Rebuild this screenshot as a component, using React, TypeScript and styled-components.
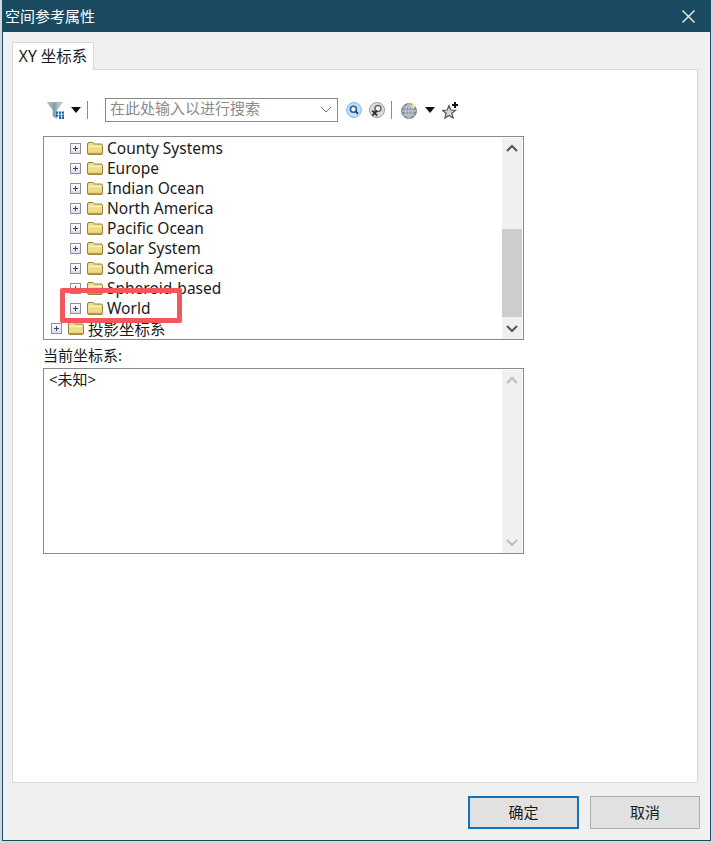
import styled, { createGlobalStyle } from "styled-components";

const FONT = `"Noto Sans", "Noto Sans CJK SC", sans-serif`;

const GlobalStyle = createGlobalStyle`
  html, body {
    margin: 0;
    padding: 0;
    background: #cfd9de;
  }
  body {
    font-family: ${FONT};
    color: #1a1a1a;
  }
`;

const Window = styled.div`
  box-sizing: border-box;
  width: 709px;
  height: 841px;
  margin-left: 2px;
  display: flex;
  flex-direction: column;
  background: #f0f0f0;
  border: 1px solid #1c4a60;
  border-top: none;
`;

const TitleBar = styled.div`
  box-sizing: border-box;
  height: 32px;
  flex: none;
  display: flex;
  align-items: center;
  justify-content: space-between;
  background: #1a4a60;
  color: #fff;
  font-size: 15px;
  padding: 0 15px 2px 2px;
`;

const Close = styled.span`
  display: flex;
  margin-top: 2px;
`;

const TabArea = styled.div`
  flex: 1;
  min-height: 0;
  display: flex;
  flex-direction: column;
  padding: 10px 12px 0 9px;
`;

const TabStrip = styled.div`
  display: flex;
  margin-bottom: -1px;
  position: relative;
`;

const Tab = styled.div`
  box-sizing: border-box;
  width: 82px;
  height: 28px;
  display: flex;
  align-items: center;
  justify-content: center;
  padding-bottom: 3px;
  background: #fff;
  border: 1px solid #d9d9d9;
  border-bottom: none;
  font-size: 15.5px;
`;

const Panel = styled.div`
  flex: 1;
  min-height: 0;
  background: #fff;
  border: 1px solid #d9d9d9;
  padding: 28px 0 0 30px;
`;

const Toolbar = styled.div`
  display: flex;
  align-items: center;
  height: 24px;
  width: 481px;
  margin-bottom: 14px;
`;

const ToolIcon = styled.span<{ $left: number }>`
  display: flex;
  margin-left: ${(p) => p.$left}px;
`;

const Separator = styled.span<{ $left: number }>`
  width: 1px;
  height: 18px;
  background: #8c8c8c;
  margin-left: ${(p) => p.$left}px;
`;

const SearchBox = styled.div`
  box-sizing: border-box;
  width: 233px;
  height: 24px;
  margin-left: 17px;
  display: flex;
  align-items: center;
  justify-content: space-between;
  padding: 0 5px 0 4px;
  border: 1px solid #8a8a8a;
  color: #8a8a8a;
  font-size: 15px;
`;

const SearchHint = styled.span`
  margin-top: -5px;
`;

const Frame = styled.div<{ $height: number }>`
  box-sizing: border-box;
  position: relative;
  width: 481px;
  height: ${(p) => p.$height}px;
  display: flex;
  border: 1px solid #8a8a8a;
  background: #fff;
`;

const TreeList = styled.ul`
  flex: 1;
  min-width: 0;
  margin: 0;
  padding: 1px 0 0;
  list-style: none;
  overflow: hidden;
`;

const Row = styled.li<{ $level: number }>`
  height: 20px;
  display: flex;
  align-items: center;
  padding-left: ${(p) => 7 + p.$level * 19}px;
  font-size: 15.5px;
  white-space: nowrap;
`;

const RowLabel = styled.span`
  margin-left: 4px;
`;

const Expander = styled.span`
  box-sizing: border-box;
  position: relative;
  width: 11px;
  height: 11px;
  margin-right: 6px;
  flex: none;
  border: 1px solid #8e8e9c;
  background: linear-gradient(#fff, #dcdce6);
  &::before,
  &::after {
    content: "";
    position: absolute;
    background: #3c4278;
  }
  &::before {
    left: 2px;
    top: 4px;
    width: 5px;
    height: 1px;
  }
  &::after {
    left: 4px;
    top: 2px;
    width: 1px;
    height: 5px;
  }
`;

const Highlight = styled.div`
  box-sizing: border-box;
  position: absolute;
  left: 16px;
  top: 151px;
  width: 122px;
  height: 35px;
  border: 5px solid #f2575b;
  border-radius: 2px;
  pointer-events: none;
`;

const Scrollbar = styled.div`
  width: 20px;
  flex: none;
  margin: 1px 1px 0 0;
  display: flex;
  flex-direction: column;
  background: #f0f0f0;
`;

const ScrollArrow = styled.div`
  height: 20px;
  flex: none;
  display: flex;
  align-items: center;
  justify-content: center;
`;

const ScrollTrack = styled.div`
  flex: 1;
  min-height: 0;
  padding-top: 71px;
`;

const ScrollThumb = styled.div`
  height: 88px;
  background: #cdcdcd;
`;

const FieldLabel = styled.div`
  height: 28px;
  display: flex;
  align-items: center;
  font-size: 15px;
`;

const ReadOnlyText = styled.div`
  flex: 1;
  padding: 0 0 0 5px;
  font-size: 15px;
  line-height: 20px;
`;

const Footer = styled.div`
  height: 57px;
  flex: none;
  display: flex;
  justify-content: flex-end;
  gap: 11px;
  padding: 13px 10px 0 0;
  box-sizing: border-box;
`;

const Button = styled.button<{ $primary?: boolean }>`
  box-sizing: border-box;
  width: ${(p) => (p.$primary ? 111 : 110)}px;
  height: 33px;
  padding: 0 0 2px;
  font-family: ${FONT};
  font-size: 15px;
  color: #1a1a1a;
  background: #e1e1e1;
  border: ${(p) => (p.$primary ? "2px solid #0f74bd" : "1px solid #adadad")};
`;

const Chevron = ({
  up,
  color = "#555",
  weight = 2,
}: {
  up?: boolean;
  color?: string;
  weight?: number;
}) => (
  <svg width="12" height="8" viewBox="0 0 12 8">
    <path
      d={up ? "M1 7 L6 2 L11 7" : "M1 1 L6 6 L11 1"}
      fill="none"
      stroke={color}
      strokeWidth={weight}
    />
  </svg>
);

const Caret = () => (
  <svg width="10" height="6" viewBox="0 0 10 6">
    <path d="M0 0 H10 L5 6 Z" fill="#111" />
  </svg>
);

const FilterIcon = () => (
  <svg width="17" height="17" viewBox="0 0 17 17">
    <defs>
      <linearGradient id="funnel" x1="0" x2="1" y1="0" y2="0">
        <stop offset="0" stopColor="#c9d3d8" />
        <stop offset="0.45" stopColor="#7f99a6" />
        <stop offset="1" stopColor="#dfe5e8" />
      </linearGradient>
    </defs>
    <path d="M0.5 0.5 H15 L9.5 8 V16.5 L6 14 V8 Z" fill="url(#funnel)" stroke="#8fa0a8" strokeWidth="0.7" />
    <path
      d="M9 9.5h2.2v2.2H9zM12 9.5h2.2v2.2H12zM15 9.5h2v2.2h-2zM9 12.5h2.2v2.2H9zM12 12.5h2.2v2.2H12zM15 12.5h2v2.2h-2zM12 15h2.2v2H12zM15 15h2v2h-2z"
      fill="#1f63aa"
    />
  </svg>
);

const SearchIcon = () => (
  <svg width="16" height="16" viewBox="0 0 16 16">
    <circle cx="8" cy="8" r="7.4" fill="#bfe0f5" stroke="#7db6dc" />
    <circle cx="7.4" cy="7.2" r="3" fill="#fff" stroke="#1d5c9e" strokeWidth="1.6" />
    <path d="M9.6 9.4 L12 11.8" stroke="#1d3f7a" strokeWidth="2" />
  </svg>
);

const ClearSearchIcon = () => (
  <svg width="16" height="16" viewBox="0 0 16 16">
    <circle cx="8" cy="8" r="7.5" fill="#dedede" stroke="#9c9c9c" />
    <circle cx="9" cy="6.4" r="3" fill="#f6f6f6" stroke="#666" strokeWidth="1.5" />
    <path d="M7 8.8 L5 10.8" stroke="#444" strokeWidth="1.8" />
    <path d="M3.2 8.6 L8.2 13.6 M8.2 8.6 L3.2 13.6" stroke="#2b2b2b" strokeWidth="1.7" />
  </svg>
);

const GlobeIcon = () => (
  <svg width="17" height="17" viewBox="0 0 17 17">
    <circle cx="8" cy="9" r="7.5" fill="#8d97a8" stroke="#5f6a7a" strokeWidth="0.8" />
    <path
      d="M0.5 9 H15.5 M8 1.5 V16.5 M2 5 H14 M2 13 H14 M8 1.5 C3.5 5 3.5 13 8 16.5 M8 1.5 C12.5 5 12.5 13 8 16.5"
      fill="none"
      stroke="#dfe3e8"
      strokeWidth="0.7"
    />
    <path d="M12.5 0 L13.6 2.6 L16.5 3.5 L13.6 4.5 L12.5 7 L11.4 4.5 L8.8 3.5 L11.4 2.6 Z" fill="#f2ec8c" />
  </svg>
);

const StarPlusIcon = () => (
  <svg width="16" height="17" viewBox="0 0 16 17">
    <path
      d="M7 3.5 L8.8 8 L13.5 8.3 L9.9 11.2 L11.1 16 L7 13.4 L2.9 16 L4.1 11.2 L0.5 8.3 L5.2 8 Z"
      fill="#d4d4d4"
      stroke="#555"
      strokeWidth="1.2"
    />
    <path d="M10 3 H16 M13 0 V6" stroke="#111" strokeWidth="2" />
  </svg>
);

const FolderIcon = () => (
  <svg width="16" height="13" viewBox="0 0 16 13" style={{ flex: "none" }}>
    <path
      d="M0.5 2 Q0.5 0.5 2 0.5 H6 L7.5 2 H14 Q15.5 2 15.5 3.5 V11 Q15.5 12.5 14 12.5 H2 Q0.5 12.5 0.5 11 Z"
      fill="#eedc86"
      stroke="#94803a"
    />
    <path d="M1.5 4.5 H14.5" stroke="#fbf3c0" strokeWidth="1.4" />
    <path d="M1 11.5 H15" stroke="#b89c48" strokeWidth="1.4" />
  </svg>
);

const rows = [
  { label: "County Systems", level: 1 },
  { label: "Europe", level: 1 },
  { label: "Indian Ocean", level: 1 },
  { label: "North America", level: 1 },
  { label: "Pacific Ocean", level: 1 },
  { label: "Solar System", level: 1 },
  { label: "South America", level: 1 },
  { label: "Spheroid-based", level: 1 },
  { label: "World", level: 1 },
  { label: "投影坐标系", level: 0 },
];

export default function App() {
  return (
    <>
      <GlobalStyle />
      <Window>
        <TitleBar>
          空间参考属性
          <Close>
            <svg width="13" height="13" viewBox="0 0 13 13">
              <path d="M0.5 0.5 L12.5 12.5 M12.5 0.5 L0.5 12.5" stroke="#fff" strokeWidth="1.2" />
            </svg>
          </Close>
        </TitleBar>
        <TabArea>
          <TabStrip>
            <Tab>XY 坐标系</Tab>
          </TabStrip>
          <Panel>
            <Toolbar>
              <ToolIcon $left={4}>
                <FilterIcon />
              </ToolIcon>
              <ToolIcon $left={7}>
                <Caret />
              </ToolIcon>
              <Separator $left={6} />
              <SearchBox>
                <SearchHint>在此处输入以进行搜索</SearchHint>
                <Chevron color="#777" weight={1} />
              </SearchBox>
              <ToolIcon $left={8}>
                <SearchIcon />
              </ToolIcon>
              <ToolIcon $left={7}>
                <ClearSearchIcon />
              </ToolIcon>
              <Separator $left={6} />
              <ToolIcon $left={9}>
                <GlobeIcon />
              </ToolIcon>
              <ToolIcon $left={7}>
                <Caret />
              </ToolIcon>
              <ToolIcon $left={7}>
                <StarPlusIcon />
              </ToolIcon>
            </Toolbar>
            <Frame $height={204}>
              <TreeList>
                {rows.map((row) => (
                  <Row key={row.label} $level={row.level}>
                    <Expander />
                    <FolderIcon />
                    <RowLabel>{row.label}</RowLabel>
                  </Row>
                ))}
              </TreeList>
              <Scrollbar>
                <ScrollArrow>
                  <Chevron up />
                </ScrollArrow>
                <ScrollTrack>
                  <ScrollThumb />
                </ScrollTrack>
                <ScrollArrow>
                  <Chevron />
                </ScrollArrow>
              </Scrollbar>
              <Highlight />
            </Frame>
            <FieldLabel>当前坐标系:</FieldLabel>
            <Frame $height={186}>
              <ReadOnlyText>&lt;未知&gt;</ReadOnlyText>
              <Scrollbar>
                <ScrollArrow>
                  <Chevron up color="#bdbdbd" />
                </ScrollArrow>
                <ScrollTrack />
                <ScrollArrow>
                  <Chevron color="#bdbdbd" />
                </ScrollArrow>
              </Scrollbar>
            </Frame>
          </Panel>
        </TabArea>
        <Footer>
          <Button $primary>确定</Button>
          <Button>取消</Button>
        </Footer>
      </Window>
    </>
  );
}
